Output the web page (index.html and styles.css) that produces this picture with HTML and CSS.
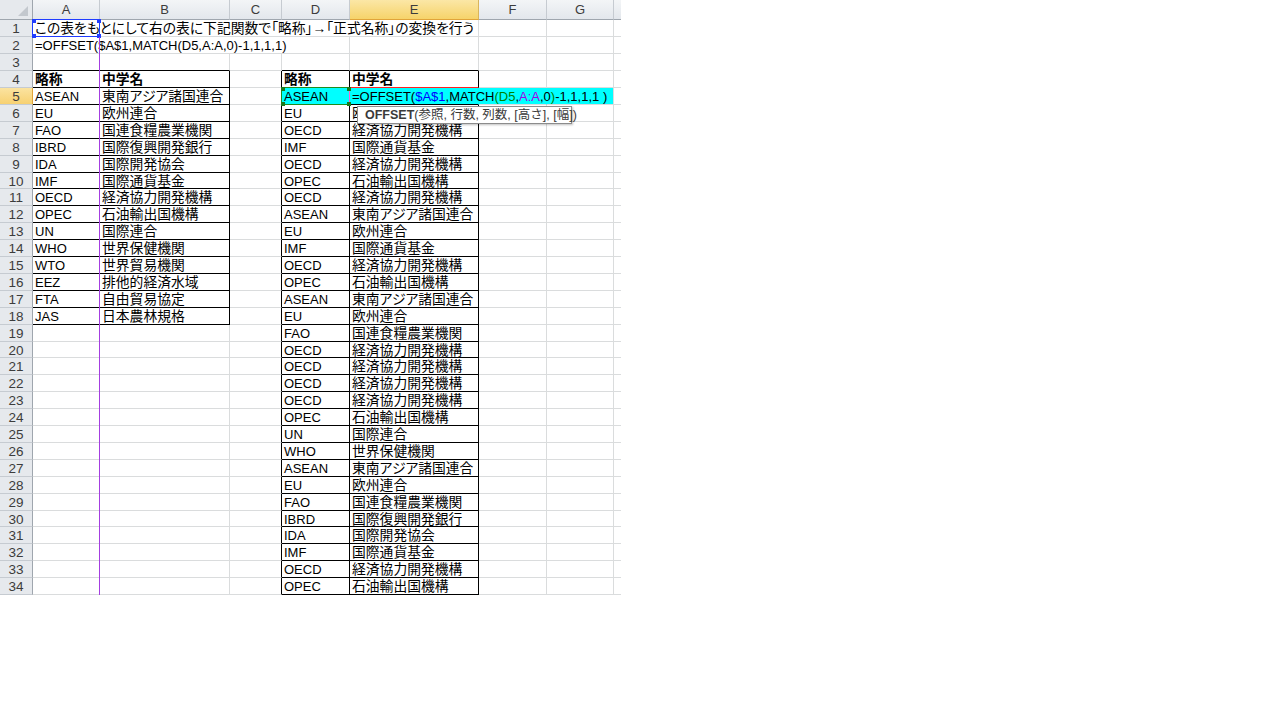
FILE: index.html
```html
<!DOCTYPE html>
<html lang="ja">
<head>
<meta charset="utf-8">
<title>Sheet</title>
<link rel="stylesheet" href="styles.css">
</head>
<body>
<div class="sheet">
  <div class="grid">
    <!-- header -->
    <div class="corner"><span class="tri"></span></div>
    <div class="ch">A</div><div class="ch">B</div><div class="ch">C</div><div class="ch">D</div>
    <div class="ch sel">E</div><div class="ch">F</div><div class="ch">G</div><div class="ch end"></div>
    <!-- 1 -->
    <div class="rh">1</div>
    <div class="c span5">この表をもとにして右の表に下記関数で「略称」→「正式名称」の変換を行う</div>
    <div class="c"></div><div class="c"></div><div class="c end"></div>
    <!-- 2 -->
    <div class="rh">2</div>
    <div class="c span4 en">=OFFSET($A$1,MATCH(D5,A:A,0)-1,1,1,1)</div>
    <div class="c"></div><div class="c"></div><div class="c"></div><div class="c end"></div>
    <!-- 3 -->
    <div class="rh">3</div>
    <div class="c bb"></div><div class="c bb"></div><div class="c"></div><div class="c bb"></div><div class="c bb"></div><div class="c"></div><div class="c"></div><div class="c end"></div>
    <!-- 4 -->
    <div class="rh">4</div>
    <div class="c tb b">略称</div><div class="c tb b">中学名</div><div class="c br"></div><div class="c tb b">略称</div><div class="c tb b redb">中学名</div><div class="c"></div><div class="c"></div><div class="c end"></div>
    <!-- 5 -->
    <div class="rh sel">5</div>
    <div class="c tb en">ASEAN</div><div class="c tb">東南アジア諸国連合</div><div class="c br"></div><div class="c tb cy pinkr en">ASEAN</div>
    <div class="c tb cy nr"><span class="edit">=OFFSET(<span class="fb">$A$1</span>,MATCH<span class="fg">(D5</span>,<span class="fp">A:A</span>,0<span class="fg">)</span>-1,1,1,1 )</span></div>
    <div class="c cy nr"></div><div class="c cy"></div><div class="c end"></div>
    <!-- 6 -->
    <div class="rh">6</div>
    <div class="c tb en">EU</div><div class="c tb">欧州連合</div><div class="c br"></div><div class="c tb en">EU</div><div class="c tb">欧州連合</div><div class="c"></div><div class="c"></div><div class="c end"></div>
    <!-- 7 -->
    <div class="rh">7</div>
    <div class="c tb en">FAO</div><div class="c tb">国連食糧農業機関</div><div class="c br"></div><div class="c tb en">OECD</div><div class="c tb">経済協力開発機構</div><div class="c"></div><div class="c"></div><div class="c end"></div>
    <!-- 8 -->
    <div class="rh">8</div>
    <div class="c tb en">IBRD</div><div class="c tb">国際復興開発銀行</div><div class="c br"></div><div class="c tb en">IMF</div><div class="c tb">国際通貨基金</div><div class="c"></div><div class="c"></div><div class="c end"></div>
    <!-- 9 -->
    <div class="rh">9</div>
    <div class="c tb en">IDA</div><div class="c tb">国際開発協会</div><div class="c br"></div><div class="c tb en">OECD</div><div class="c tb">経済協力開発機構</div><div class="c"></div><div class="c"></div><div class="c end"></div>
    <!-- 10 -->
    <div class="rh">10</div>
    <div class="c tb en">IMF</div><div class="c tb">国際通貨基金</div><div class="c br"></div><div class="c tb en">OPEC</div><div class="c tb">石油輸出国機構</div><div class="c"></div><div class="c"></div><div class="c end"></div>
    <!-- 11 -->
    <div class="rh">11</div>
    <div class="c tb en">OECD</div><div class="c tb">経済協力開発機構</div><div class="c br"></div><div class="c tb en">OECD</div><div class="c tb">経済協力開発機構</div><div class="c"></div><div class="c"></div><div class="c end"></div>
    <!-- 12 -->
    <div class="rh">12</div>
    <div class="c tb en">OPEC</div><div class="c tb">石油輸出国機構</div><div class="c br"></div><div class="c tb en">ASEAN</div><div class="c tb">東南アジア諸国連合</div><div class="c"></div><div class="c"></div><div class="c end"></div>
    <!-- 13 -->
    <div class="rh">13</div>
    <div class="c tb en">UN</div><div class="c tb">国際連合</div><div class="c br"></div><div class="c tb en">EU</div><div class="c tb">欧州連合</div><div class="c"></div><div class="c"></div><div class="c end"></div>
    <!-- 14 -->
    <div class="rh">14</div>
    <div class="c tb en">WHO</div><div class="c tb">世界保健機関</div><div class="c br"></div><div class="c tb en">IMF</div><div class="c tb">国際通貨基金</div><div class="c"></div><div class="c"></div><div class="c end"></div>
    <!-- 15 -->
    <div class="rh">15</div>
    <div class="c tb en">WTO</div><div class="c tb">世界貿易機関</div><div class="c br"></div><div class="c tb en">OECD</div><div class="c tb">経済協力開発機構</div><div class="c"></div><div class="c"></div><div class="c end"></div>
    <!-- 16 -->
    <div class="rh">16</div>
    <div class="c tb en">EEZ</div><div class="c tb">排他的経済水域</div><div class="c br"></div><div class="c tb en">OPEC</div><div class="c tb">石油輸出国機構</div><div class="c"></div><div class="c"></div><div class="c end"></div>
    <!-- 17 -->
    <div class="rh">17</div>
    <div class="c tb en">FTA</div><div class="c tb">自由貿易協定</div><div class="c br"></div><div class="c tb en">ASEAN</div><div class="c tb">東南アジア諸国連合</div><div class="c"></div><div class="c"></div><div class="c end"></div>
    <!-- 18 -->
    <div class="rh">18</div>
    <div class="c tb en">JAS</div><div class="c tb">日本農林規格</div><div class="c br"></div><div class="c tb en">EU</div><div class="c tb">欧州連合</div><div class="c"></div><div class="c"></div><div class="c end"></div>
    <!-- 19 -->
    <div class="rh">19</div>
    <div class="c"></div><div class="c"></div><div class="c br"></div><div class="c tb en">FAO</div><div class="c tb">国連食糧農業機関</div><div class="c"></div><div class="c"></div><div class="c end"></div>
    <!-- 20 -->
    <div class="rh">20</div>
    <div class="c"></div><div class="c"></div><div class="c br"></div><div class="c tb en">OECD</div><div class="c tb">経済協力開発機構</div><div class="c"></div><div class="c"></div><div class="c end"></div>
    <!-- 21 -->
    <div class="rh">21</div>
    <div class="c"></div><div class="c"></div><div class="c br"></div><div class="c tb en">OECD</div><div class="c tb">経済協力開発機構</div><div class="c"></div><div class="c"></div><div class="c end"></div>
    <!-- 22 -->
    <div class="rh">22</div>
    <div class="c"></div><div class="c"></div><div class="c br"></div><div class="c tb en">OECD</div><div class="c tb">経済協力開発機構</div><div class="c"></div><div class="c"></div><div class="c end"></div>
    <!-- 23 -->
    <div class="rh">23</div>
    <div class="c"></div><div class="c"></div><div class="c br"></div><div class="c tb en">OECD</div><div class="c tb">経済協力開発機構</div><div class="c"></div><div class="c"></div><div class="c end"></div>
    <!-- 24 -->
    <div class="rh">24</div>
    <div class="c"></div><div class="c"></div><div class="c br"></div><div class="c tb en">OPEC</div><div class="c tb">石油輸出国機構</div><div class="c"></div><div class="c"></div><div class="c end"></div>
    <!-- 25 -->
    <div class="rh">25</div>
    <div class="c"></div><div class="c"></div><div class="c br"></div><div class="c tb en">UN</div><div class="c tb">国際連合</div><div class="c"></div><div class="c"></div><div class="c end"></div>
    <!-- 26 -->
    <div class="rh">26</div>
    <div class="c"></div><div class="c"></div><div class="c br"></div><div class="c tb en">WHO</div><div class="c tb">世界保健機関</div><div class="c"></div><div class="c"></div><div class="c end"></div>
    <!-- 27 -->
    <div class="rh">27</div>
    <div class="c"></div><div class="c"></div><div class="c br"></div><div class="c tb en">ASEAN</div><div class="c tb">東南アジア諸国連合</div><div class="c"></div><div class="c"></div><div class="c end"></div>
    <!-- 28 -->
    <div class="rh">28</div>
    <div class="c"></div><div class="c"></div><div class="c br"></div><div class="c tb en">EU</div><div class="c tb">欧州連合</div><div class="c"></div><div class="c"></div><div class="c end"></div>
    <!-- 29 -->
    <div class="rh">29</div>
    <div class="c"></div><div class="c"></div><div class="c br"></div><div class="c tb en">FAO</div><div class="c tb">国連食糧農業機関</div><div class="c"></div><div class="c"></div><div class="c end"></div>
    <!-- 30 -->
    <div class="rh">30</div>
    <div class="c"></div><div class="c"></div><div class="c br"></div><div class="c tb en">IBRD</div><div class="c tb">国際復興開発銀行</div><div class="c"></div><div class="c"></div><div class="c end"></div>
    <!-- 31 -->
    <div class="rh">31</div>
    <div class="c"></div><div class="c"></div><div class="c br"></div><div class="c tb en">IDA</div><div class="c tb">国際開発協会</div><div class="c"></div><div class="c"></div><div class="c end"></div>
    <!-- 32 -->
    <div class="rh">32</div>
    <div class="c"></div><div class="c"></div><div class="c br"></div><div class="c tb en">IMF</div><div class="c tb">国際通貨基金</div><div class="c"></div><div class="c"></div><div class="c end"></div>
    <!-- 33 -->
    <div class="rh">33</div>
    <div class="c"></div><div class="c"></div><div class="c br"></div><div class="c tb en">OECD</div><div class="c tb">経済協力開発機構</div><div class="c"></div><div class="c"></div><div class="c end"></div>
    <!-- 34 -->
    <div class="rh">34</div>
    <div class="c"></div><div class="c"></div><div class="c br"></div><div class="c tb en">OPEC</div><div class="c tb">石油輸出国機構</div><div class="c"></div><div class="c"></div><div class="c end"></div>
  </div>

  <!-- range highlights from the formula being edited -->
  <div class="ref ref-a1"><i class="h tl"></i><i class="h tr"></i><i class="h bl"></i><i class="h br2"></i></div>
  <div class="ref ref-col"></div>
  <div class="ref ref-d5"><i class="g tl"></i><i class="g tr"></i><i class="g bl"></i><i class="g br2"></i></div>

  <div class="tip"><b>OFFSET</b>(参照, 行数, 列数, [高さ], [幅])</div>
</div>
</body>
</html>
```

FILE: styles.css
```css
html, body {
  margin: 0;
  padding: 0;
  background: #ffffff;
}

.sheet {
  position: relative;
  width: 621px;
}

.grid {
  display: grid;
  grid-template-columns: 33px 67px 130px 52px 68px 129px 68px 67px 7px;
  grid-template-rows: 20px
    17px 17px 17px 17px 17px 17px 17px 17px 17px 16px
    17px 17px 17px 17px 17px 17px 17px 17px 17px 16px
    17px 17px 17px 17px 17px 17px 17px 17px 17px 16px
    17px 17px 17px 17px;
  font-family: "Liberation Sans", "Noto Sans CJK JP", sans-serif;
}

.grid > div {
  box-sizing: border-box;
  min-width: 0;
}

/* header cells */
.corner {
  background: #e6e9ed;
  border-right: 1px solid #9fa6ae;
  border-bottom: 1px solid #9fa6ae;
  display: flex;
  justify-content: flex-end;
  align-items: flex-end;
  padding: 0 4px 3px 0;
}
.tri {
  width: 0;
  height: 0;
  border-left: 10px solid transparent;
  border-bottom: 10px solid #c3c8ce;
}

.ch {
  background: linear-gradient(#f3f5f7, #e3e7ec);
  border-right: 1px solid #c6cbd1;
  border-bottom: 1px solid #9fa6ae;
  color: #3c3c3c;
  font-size: 13px;
  line-height: 20px;
  text-align: center;
}
.ch.end {
  border-right: none;
}
.ch.sel {
  background: linear-gradient(#fbe7a6, #f6d36a);
  border-bottom-color: #e0a43a;
  border-right-color: #d9b55c;
}

.rh {
  background: #e6e9ed;
  border-right: 1px solid #9fa6ae;
  border-bottom: 1px solid #c6cbd1;
  color: #3c3c3c;
  font-size: 13.5px;
  line-height: 16px;
  padding-top: 1px;
  text-align: center;
}
.rh.sel {
  background: linear-gradient(#fbe3a0, #f7d172);
  border-right-color: #e0a43a;
}

/* ordinary cells */
.c {
  border-right: 1px solid #dadcdd;
  border-bottom: 1px solid #dadcdd;
  font-size: 13.8px;
  line-height: 16px;
  padding-top: 1px;
  color: #000000;
  padding-left: 2px;
  white-space: nowrap;
  overflow: visible;
  font-feature-settings: "palt";
}
.c.en {
  font-size: 13px;
}
.c.end {
  border-right: none;
}
.span5 {
  grid-column: span 5;
}
.span4 {
  grid-column: span 4;
}

.tb {
  border-right-color: #000000;
  border-bottom-color: #000000;
}
.bb {
  border-bottom-color: #000000;
}
.br {
  border-right-color: #000000;
}
.b {
  font-weight: bold;
}
.redb {
  border-bottom-color: #ff2020;
}
.cy {
  background: #00ffff;
}
.nr {
  border-right-color: transparent;
}
.cy.nr {
  border-right-color: #00ffff;
}
.pinkr {
  border-right-color: #ff5fd0;
}

.edit {
  position: relative;
  z-index: 1;
  font-size: 13px;
}
.fb { color: #0000ff; }
.fg { color: #008000; }
.fp { color: #a200e8; }

/* range reference frames */
.ref {
  position: absolute;
  box-sizing: border-box;
  pointer-events: none;
}
.ref-a1 {
  left: 32px;
  top: 19px;
  width: 68px;
  height: 18px;
  border: 1px solid #1f3cff;
}
.ref-col {
  left: 99px;
  top: 37px;
  width: 1px;
  height: 558px;
  background: #a43ee0;
}
.ref-d5 {
  left: 281px;
  top: 87px;
  width: 69px;
  height: 18px;
  border: 1px solid #1f8a1f;
  border-right-color: #ff5fd0;
}
.h, .g {
  position: absolute;
  width: 4px;
  height: 4px;
}
.h { background: #1f3cff; }
.g { background: #1a7a1a; }
.tl { left: -1px; top: -1px; }
.tr { right: -2px; top: -1px; }
.bl { left: -1px; bottom: -2px; }
.br2 { right: -2px; bottom: -2px; }

/* function tooltip */
.tip {
  position: absolute;
  left: 357px;
  top: 106px;
  width: 215px;
  height: 18px;
  box-sizing: border-box;
  background: #ffffff;
  border: 1px solid #8c8c8c;
  box-shadow: 1px 1px 2px rgba(0, 0, 0, 0.25);
  padding-left: 7px;
  font-family: "Liberation Sans", "Noto Sans CJK JP", sans-serif;
  font-size: 12.5px;
  line-height: 16px;
  color: #3a3a3a;
  white-space: nowrap;
}
.tip b {
  font-weight: bold;
}
```
